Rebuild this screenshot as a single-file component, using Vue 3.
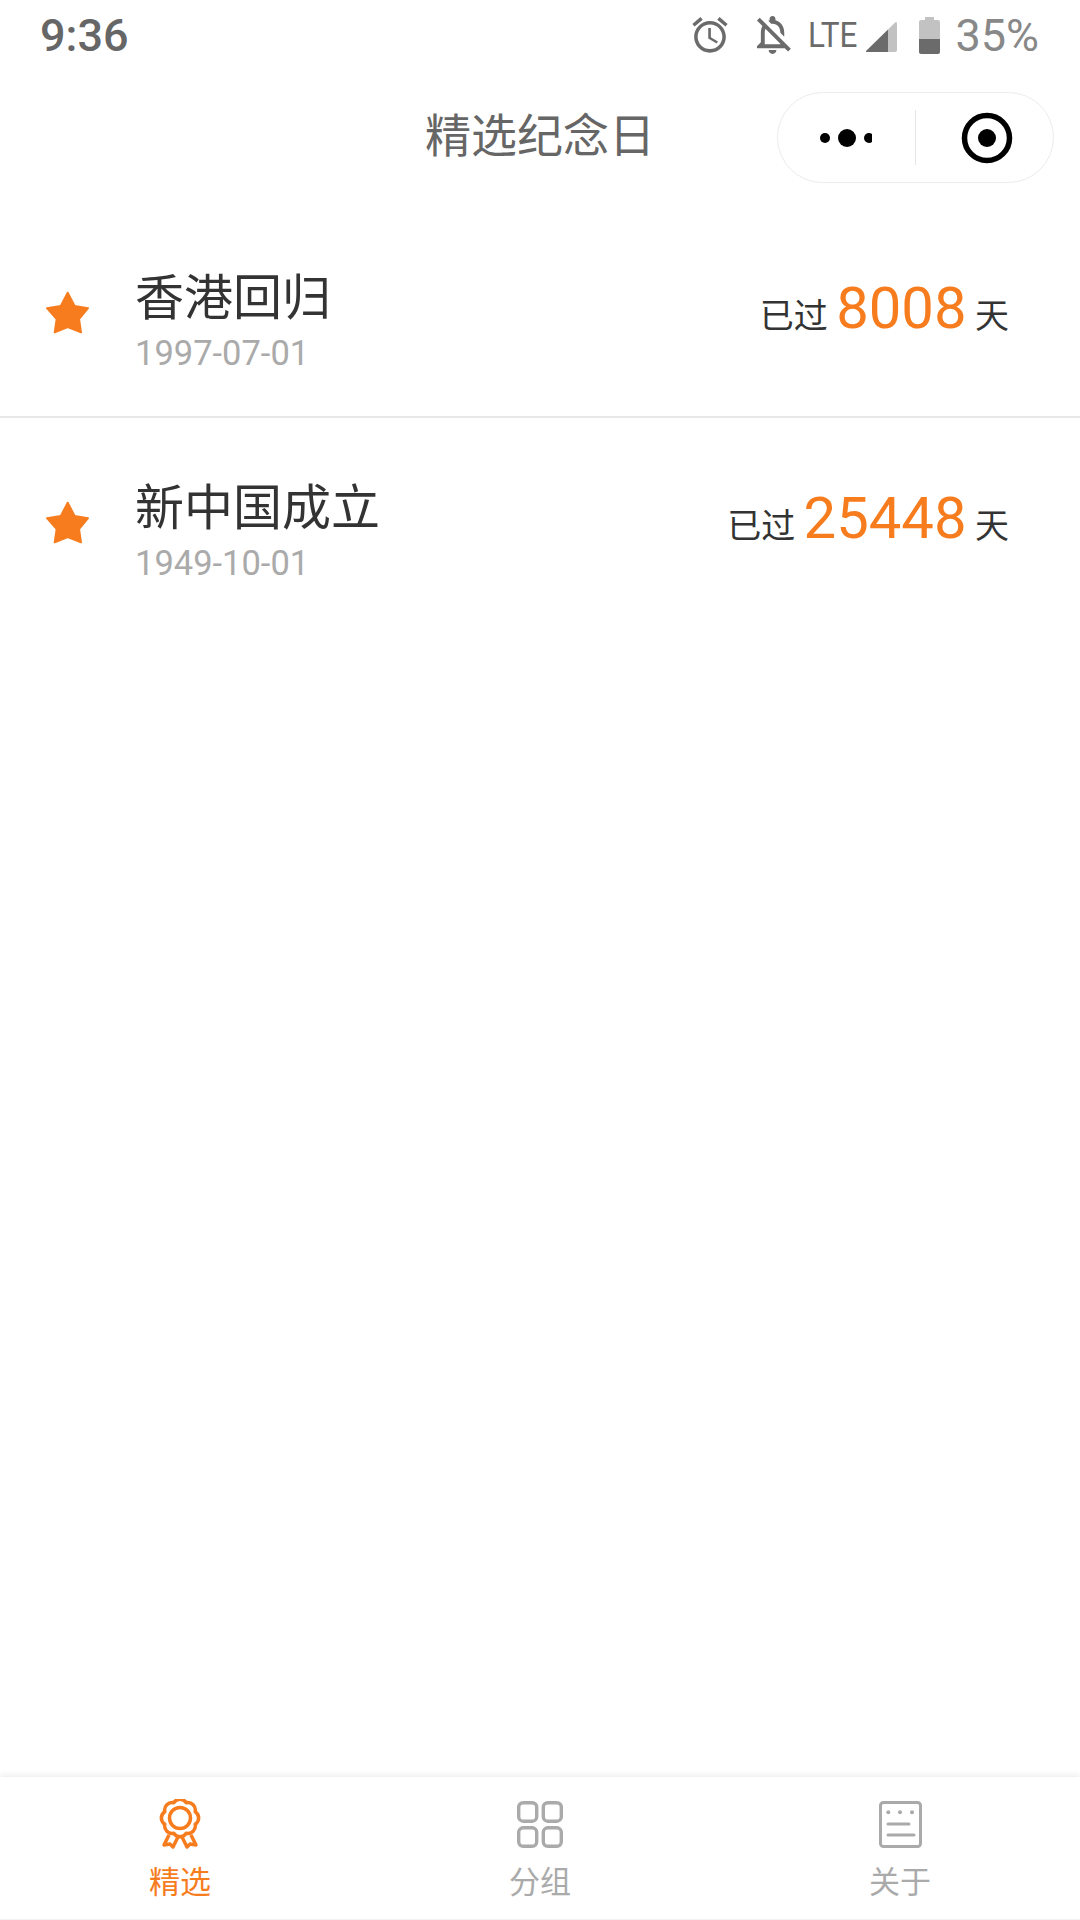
<template>
  <div class="page">
    <div class="status-bar">
      <span class="clock">9:36</span>
      <div class="status-icons">
        <svg class="ic-alarm" viewBox="2 1.8 20 20.4"><path fill="#6b6b6b" d="M22 5.72l-4.6-3.86-1.29 1.53 4.6 3.86L22 5.72zM7.88 3.39L6.6 1.86 2 5.71l1.29 1.53 4.59-3.85zM12.5 8H11v6l4.75 2.85.75-1.23-4-2.37V8zM12 4c-4.97 0-9 4.03-9 9s4.03 9 9 9 9-4.03 9-9-4.03-9-9-9zm0 16c-3.87 0-7-3.13-7-7s3.13-7 7-7 7 3.13 7 7-3.13 7-7 7z" /></svg>
        <svg class="ic-bell" viewBox="4 2.5 17.5 19.5"><path fill="#6b6b6b" d="M12 22c1.1 0 2-.9 2-2h-4c0 1.1.9 2 2 2zm0-15.5c2.49 0 4 2.02 4 4.5v.1l2 2V11c0-3.07-1.63-5.64-4.5-6.32V4c0-.83-.67-1.5-1.5-1.5s-1.5.67-1.5 1.5v.68c-.24.06-.47.15-.69.23l1.64 1.64c.18-.02.36-.05.55-.05zM5.41 3.35L4 4.76l2.81 2.81C6.29 8.57 6 9.74 6 11v5l-2 2v1h14.24l1.74 1.74 1.41-1.41L5.41 3.35zM16 17H8v-6c0-.68.12-1.32.34-1.9L16 16.76V17z" /></svg>
        <span class="lte">LTE</span>
        <svg class="ic-signal" viewBox="0 0 32 32">
          <path fill="#c2c2c2" d="M23 9.5 30 2.6Q32 1 32 4V30Q32 32 30 32H23Z" />
          <path fill="#6b6b6b" d="M23 9.5V32H2Q0 32 1.5 30.5Z" />
        </svg>
        <svg class="ic-battery" viewBox="0 0 21 37">
          <path fill="#c2c2c2" d="M6 0H15V3H19Q21 3 21 5V22H0V5Q0 3 2 3H6Z" />
          <path fill="#6b6b6b" d="M0 22H21V35Q21 37 19 37H2Q0 37 0 35Z" />
        </svg>
        <span class="percent">35%</span>
      </div>
    </div>

    <div class="nav">
      <span class="nav-title">精选纪念日</span>
      <div class="capsule">
        <div class="capsule-part">
          <svg class="dots" width="52" height="20" viewBox="0 0 52 20"><circle cx="5" cy="10" r="5" /><circle cx="27" cy="10" r="9" /><circle cx="49" cy="10" r="5" /></svg>
        </div>
        <div class="capsule-line"></div>
        <div class="capsule-part">
          <svg class="target" width="52" height="52" viewBox="0 0 52 52"><circle cx="26" cy="26" r="22.5" fill="none" stroke="#000" stroke-width="5.5" /><circle cx="26" cy="26" r="9" /></svg>
        </div>
      </div>
    </div>

    <div class="list">
      <div v-for="item in items" :key="item.title" class="row">
        <svg class="star" viewBox="0 0 44 44"><path fill="#f77c1e" stroke="#f77c1e" stroke-width="2" stroke-linejoin="round" d="M21.7 1.7 28.6 15 42 17.2 33 28 35 41.3 21.7 36 8.7 41.3 10.7 28 1 17.2 14.8 15Z" /></svg>
        <div class="info">
          <div class="title">{{ item.title }}</div>
          <div class="date">{{ item.date }}</div>
        </div>
        <div class="days">已过 <span class="num">{{ item.days }}</span> 天</div>
      </div>
    </div>

    <div class="tabbar">
      <div class="tab active">
        <svg class="tab-icon" viewBox="-24 -19 48 54" fill="none" stroke="#f77c1e" stroke-width="3.5" stroke-linejoin="round">
          <path d="M15.2 -6.3A7.5 7.5 0 0 1 15.2 6.3A7.5 7.5 0 0 1 6.3 15.2A7.5 7.5 0 0 1 -6.3 15.2A7.5 7.5 0 0 1 -15.2 6.3A7.5 7.5 0 0 1 -15.2 -6.3A7.5 7.5 0 0 1 -6.3 -15.2A7.5 7.5 0 0 1 6.3 -15.2A7.5 7.5 0 0 1 15.2 -6.3Z" />
          <circle r="10.5" />
          <path d="M-11 17-16 27-10 26-7 29-2 19M11 17 16 27 10 26 7 29 2 19" />
        </svg>
        <span>精选</span>
      </div>
      <div class="tab">
        <svg class="tab-icon" viewBox="-1 -2 48 54" fill="none" stroke="#aaa" stroke-width="3.4">
          <rect x="1.7" y="1.7" width="18" height="18.5" rx="4.5" />
          <rect x="26.3" y="1.7" width="18" height="18.5" rx="4.5" />
          <rect x="1.7" y="26.8" width="18" height="18.5" rx="4.5" />
          <rect x="26.3" y="26.8" width="18" height="18.5" rx="4.5" />
        </svg>
        <span>分组</span>
      </div>
      <div class="tab">
        <svg class="tab-icon" viewBox="-3 -2 48 54" fill="none" stroke="#aaa" stroke-width="3">
          <rect x="1.5" y="1.5" width="40" height="44" rx="3" />
          <path d="M9 23H30M9 34H35" stroke-linecap="round" />
          <circle cx="9.3" cy="11.3" r="2" fill="#aaa" stroke="none" />
          <circle cx="21" cy="11.3" r="2" fill="#aaa" stroke="none" />
          <circle cx="33" cy="11.3" r="2" fill="#aaa" stroke="none" />
        </svg>
        <span>关于</span>
      </div>
    </div>
  </div>
</template>

<script setup>
const items = [
  { title: '香港回归', date: '1997-07-01', days: 8008 },
  { title: '新中国成立', date: '1949-10-01', days: 25448 }
]
</script>

<style scoped>
.page {
  width: 1080px;
  height: 1920px;
  display: flex;
  flex-direction: column;
  background: #fff;
  font-family: Roboto, "Noto Sans CJK SC", sans-serif;
  overflow: hidden;
}

/* STATUS BAR */
.status-bar {
  height: 72px;
  box-sizing: border-box;
  padding: 0 41px 2px 40px;
  display: flex;
  align-items: center;
  justify-content: space-between;
}

.clock {
  font-size: 45px;
  font-weight: 500;
  color: #666;
}

.status-icons {
  display: flex;
  align-items: center;
}

.ic-alarm { width: 36px; height: 36px; margin-right: 27px; }
.ic-bell { width: 38px; height: 38px; margin-right: 15px; }
.ic-signal { width: 32px; height: 32px; margin: 2px 22px 0 10px; }
.ic-battery { width: 21px; height: 37px; margin-right: 15px; }

.lte {
  font-size: 35px;
  color: #6b6b6b;
  transform: scaleX(0.9);
  transform-origin: left center;
  width: 47px;
}

.percent {
  font-size: 45px;
  color: #888;
}

/* NAV */
.nav {
  position: relative;
  height: 132px;
  box-sizing: border-box;
  padding-bottom: 12px;
  display: flex;
  align-items: center;
  justify-content: center;
}

.nav-title {
  font-size: 46px;
  color: #666;
}

.capsule {
  position: absolute;
  left: 777px;
  top: 20px;
  width: 277px;
  height: 91px;
  box-sizing: border-box;
  border: 1px solid #ececec;
  border-radius: 46px;
  display: flex;
  align-items: center;
}

.capsule-part {
  flex: 1;
  display: flex;
  justify-content: center;
}

.dots {
  margin-right: 2px;
}

.target {
  margin-left: 4px;
}

.capsule-line {
  width: 1px;
  height: 55px;
  background: #e5e5e5;
}

/* LIST */
.list {
  flex: 1;
  padding-top: 4px;
}

.row {
  height: 208px;
  display: flex;
  align-items: center;
  padding: 0 71px 0 46px;
  border-bottom: 2px solid #e8e8e8;
}

.row:last-child {
  border-bottom: none;
}

.star {
  width: 44px;
  height: 44px;
  margin: 1px 45px 0 0;
  flex-shrink: 0;
}

.info {
  flex: 1;
  padding-top: 18px;
}

.title {
  font-size: 49px;
  line-height: 62px;
  color: #333;
}

.date {
  font-size: 34.5px;
  line-height: 42px;
  margin-top: 2px;
  color: #aaa;
}

.days {
  font-size: 34px;
  color: #333;
  margin-bottom: 8px;
}

.num {
  font-size: 58px;
  color: #f77c1e;
}

/* TAB BAR */
.tabbar {
  height: 143px;
  display: flex;
  box-sizing: border-box;
  border-bottom: 1px solid #f2f2f2;
  box-shadow: 0 -2px 6px rgba(0, 0, 0, 0.08);
  position: relative;
}

.tab {
  flex: 1;
  display: flex;
  flex-direction: column;
  align-items: center;
  font-size: 31px;
  line-height: 44px;
  color: #aaa;
  padding-top: 22px;
}

.tab.active {
  color: #f77c1e;
}

.tab-icon {
  width: 48px;
  height: 54px;
  margin-bottom: 8px;
}
</style>
